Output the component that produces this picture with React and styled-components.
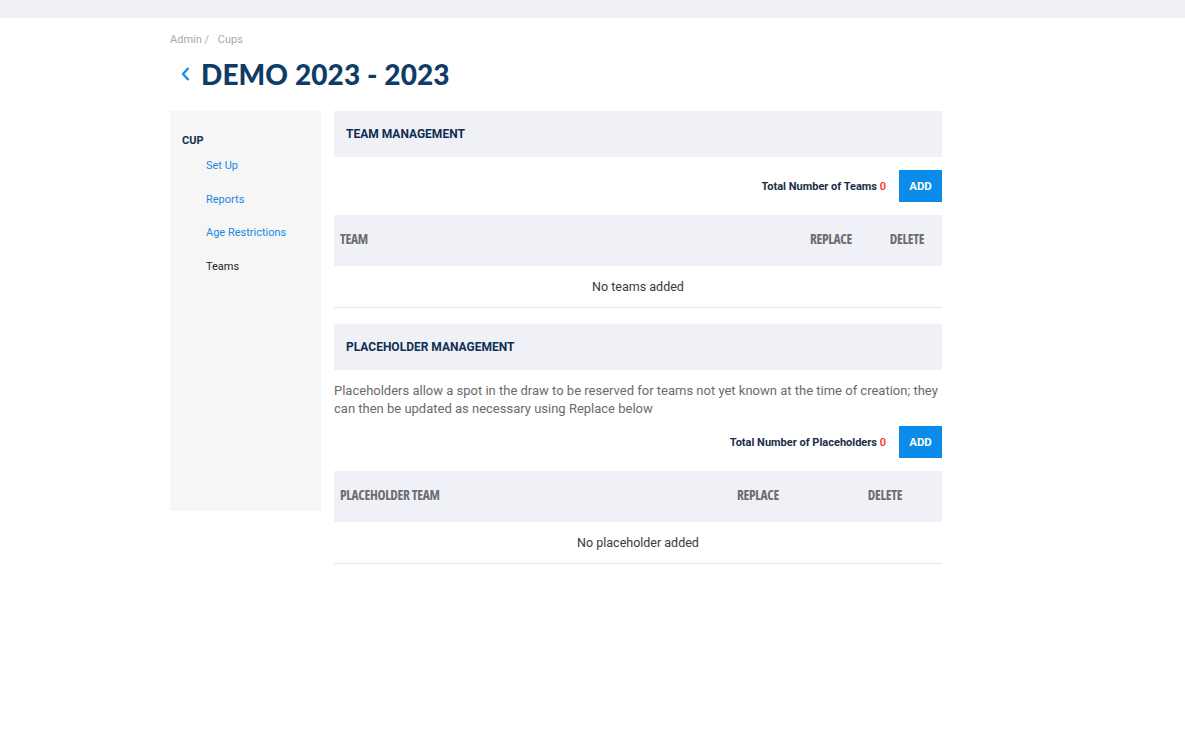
import React from "react";
import styled, { createGlobalStyle } from "styled-components";

const GlobalStyle = createGlobalStyle`
  body {
    margin: 0;
    background: #fff;
    font-family: Roboto, "Liberation Sans", sans-serif;
  }
  * { box-sizing: border-box; }
`;

const TopBar = styled.div`
  height: 18px;
  background: #f0f1f6;
`;

const Page = styled.div`
  width: 773px;
  margin-left: 170px;
`;

const Breadcrumb = styled.div`
  padding-top: 15px;
  font-size: 11px;
  color: #a8a8b0;
  line-height: 13px;
  span { margin-right: 6px; }
`;

const TitleRow = styled.div`
  display: flex;
  align-items: center;
  gap: 9px;
  margin: 12px 0 0 10px;
  height: 32px;
`;

const Title = styled.h1`
  margin: 0;
  font-family: Lato, "Liberation Sans", sans-serif;
  font-weight: 900;
  font-size: 28px;
  line-height: 32px;
  letter-spacing: 0.1px;
  color: #0e3c66;
`;

const Layout = styled.div`
  display: flex;
  gap: 13px;
  margin-top: 21px;
  align-items: flex-start;
`;

const Sidebar = styled.nav`
  width: 151px;
  height: 400px;
  background: #f6f6f7;
  padding: 23px 0 0 12px;
`;

const SideTitle = styled.div`
  font-size: 11px;
  font-weight: 700;
  color: #122f4e;
  margin-bottom: 12px;
`;

const SideLink = styled.div`
  font-size: 11px;
  color: ${(p) => (p.$active ? "#222" : "#2188e3")};
  padding-left: 24px;
  height: 33.7px;
  line-height: 13px;
`;

const Main = styled.main`
  width: 608px;
`;

const SectionHead = styled.div`
  height: 46px;
  background: #f0f1f6;
  display: flex;
  align-items: center;
  padding-left: 12px;
  font-size: 12px;
  font-weight: 700;
  color: #0f2f52;
  margin-top: ${(p) => p.$top || 0}px;
`;

const Description = styled.p`
  margin: 12px 0 0;
  font-size: 13px;
  line-height: 18px;
  color: #6b6b6b;
`;

const TotalRow = styled.div`
  display: flex;
  justify-content: flex-end;
  align-items: center;
  gap: 13px;
  margin-top: ${(p) => p.$top}px;
  margin-bottom: 13px;
`;

const TotalLabel = styled.span`
  font-size: 11px;
  font-weight: 700;
  color: #1a2c48;
  em { font-style: normal; color: #ff1a1a; font-weight: 500; }
`;

const AddButton = styled.button`
  width: 43px;
  height: 32px;
  border: 0;
  background: #0b8ce8;
  color: #fff;
  font-family: Roboto, sans-serif;
  font-weight: 700;
  font-size: 11.5px;
  padding: 0;
`;

const TableHead = styled.div`
  display: grid;
  grid-template-columns: ${(p) => p.$cols};
  height: 51px;
  align-items: center;
  background: #f0f1f6;
  padding: 0 0 3px 6px;
  font-family: "Open Sans", sans-serif;
  font-stretch: condensed;
  font-size: 13.5px;
  font-weight: 700;
  color: #6c6c72;
  letter-spacing: -0.3px;
`;

const HeadCell = styled.div`
  text-align: ${(p) => (p.$center ? "center" : "left")};
`;

const EmptyRow = styled.div`
  height: 42px;
  display: flex;
  align-items: center;
  justify-content: center;
  font-size: 12.5px;
  color: #3a3a3a;
  border-bottom: 1px solid #e6e6e9;
`;

const Chevron = () => (
  <svg width="12" height="18" viewBox="0 0 12 18">
    <path d="M8.5 3 L3 9 L8.5 15" fill="none" stroke="#1a8de6" strokeWidth="2.4" />
  </svg>
);

export default function App() {
  return (
    <>
      <GlobalStyle />
      <TopBar />
      <Page>
        <Breadcrumb>
          <span>Admin /</span> Cups
        </Breadcrumb>
        <TitleRow>
          <Chevron />
          <Title>DEMO 2023 - 2023</Title>
        </TitleRow>
        <Layout>
          <Sidebar>
            <SideTitle>CUP</SideTitle>
            <SideLink>Set Up</SideLink>
            <SideLink>Reports</SideLink>
            <SideLink>Age Restrictions</SideLink>
            <SideLink $active>Teams</SideLink>
          </Sidebar>
          <Main>
            <SectionHead>TEAM MANAGEMENT</SectionHead>
            <TotalRow $top={13}>
              <TotalLabel>
                Total Number of Teams <em>0</em>
              </TotalLabel>
              <AddButton>ADD</AddButton>
            </TotalRow>
            <TableHead $cols="1fr 82px 70px">
              <HeadCell>TEAM</HeadCell>
              <HeadCell $center>REPLACE</HeadCell>
              <HeadCell $center>DELETE</HeadCell>
            </TableHead>
            <EmptyRow>No teams added</EmptyRow>

            <SectionHead $top={16}>PLACEHOLDER MANAGEMENT</SectionHead>
            <Description>
              Placeholders allow a spot in the draw to be reserved for teams not yet known at the time of creation; they
              can then be updated as necessary using Replace below
            </Description>
            <TotalRow $top={8}>
              <TotalLabel>
                Total Number of Placeholders <em>0</em>
              </TotalLabel>
              <AddButton>ADD</AddButton>
            </TotalRow>
            <TableHead $cols="1fr 140px 114px">
              <HeadCell>PLACEHOLDER TEAM</HeadCell>
              <HeadCell $center>REPLACE</HeadCell>
              <HeadCell $center>DELETE</HeadCell>
            </TableHead>
            <EmptyRow>No placeholder added</EmptyRow>
          </Main>
        </Layout>
      </Page>
    </>
  );
}
